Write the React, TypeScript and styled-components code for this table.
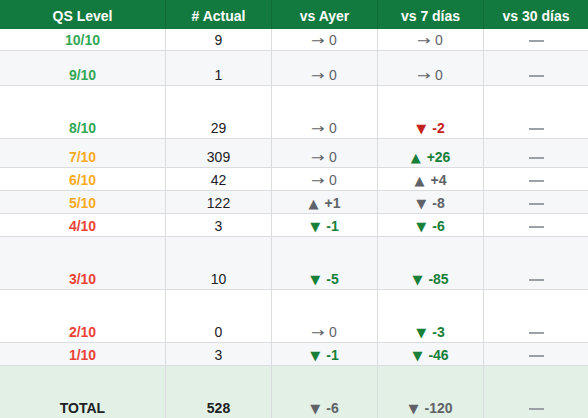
import React from "react";
import styled, { createGlobalStyle } from "styled-components";

const GlobalStyle = createGlobalStyle`
    html, body {
        margin: 0;
        padding: 0;
        background: #ffffff;
    }
    body {
        font-family: "Liberation Sans", Arial, sans-serif;
        font-size: 14px;
        color: #202124;
    }
`;

type Tone = "green" | "red" | "gray";

type Delta =
    | { kind: "flat" }
    | { kind: "up" | "down"; value: string; tone: Tone };

type Row = {
    level: string;
    levelColor: string;
    actual: string;
    ayer: Delta;
    siete: Delta;
    height: number;
    striped: boolean;
};

const toneColors: Record<Tone, string> = {
    green: "#188038",
    red: "#c5221f",
    gray: "#5f6368",
};

const GREEN = "#34a853";
const AMBER = "#f9ab1f";
const RED = "#ea4335";

const flat: Delta = { kind: "flat" };

const rows: Row[] = [
    { level: "10/10", levelColor: GREEN, actual: "9", ayer: flat, siete: flat, height: 22, striped: false },
    { level: "9/10", levelColor: GREEN, actual: "1", ayer: flat, siete: flat, height: 35, striped: true },
    { level: "8/10", levelColor: GREEN, actual: "29", ayer: flat, siete: { kind: "down", value: "-2", tone: "red" }, height: 53, striped: false },
    { level: "7/10", levelColor: AMBER, actual: "309", ayer: flat, siete: { kind: "up", value: "+26", tone: "green" }, height: 29, striped: true },
    { level: "6/10", levelColor: AMBER, actual: "42", ayer: flat, siete: { kind: "up", value: "+4", tone: "gray" }, height: 23, striped: false },
    { level: "5/10", levelColor: AMBER, actual: "122", ayer: { kind: "up", value: "+1", tone: "gray" }, siete: { kind: "down", value: "-8", tone: "gray" }, height: 23, striped: true },
    { level: "4/10", levelColor: RED, actual: "3", ayer: { kind: "down", value: "-1", tone: "green" }, siete: { kind: "down", value: "-6", tone: "green" }, height: 23, striped: false },
    { level: "3/10", levelColor: RED, actual: "10", ayer: { kind: "down", value: "-5", tone: "green" }, siete: { kind: "down", value: "-85", tone: "green" }, height: 53, striped: true },
    { level: "2/10", levelColor: RED, actual: "0", ayer: flat, siete: { kind: "down", value: "-3", tone: "green" }, height: 53, striped: false },
    { level: "1/10", levelColor: RED, actual: "3", ayer: { kind: "down", value: "-1", tone: "green" }, siete: { kind: "down", value: "-46", tone: "green" }, height: 23, striped: true },
];

const Sheet = styled.div`
    width: 588px;
    overflow: hidden;
`;

const Line = styled.div<{ $height: number; $bg: string }>`
    display: grid;
    grid-template-columns: 166px 106px 106px 106px 1fr;
    height: ${({ $height }) => $height}px;
    background: ${({ $bg }) => $bg};
    border-bottom: 1px solid #dadce0;
    box-sizing: border-box;
`;

const HeaderLine = styled(Line)`
    border-bottom: none;
`;

const HeadCell = styled.div`
    display: flex;
    align-items: center;
    justify-content: center;
    color: #ffffff;
    font-weight: bold;
    font-size: 14px;
    padding-top: 3px;
    border-right: 1px solid rgba(0, 0, 0, 0.12);

    &:last-child {
        border-right: none;
    }
`;

const Cell = styled.div<{ $color?: string; $bold?: boolean }>`
    display: flex;
    align-items: flex-end;
    justify-content: center;
    padding-bottom: 1px;
    line-height: 17px;
    border-right: 1px solid #dadce0;
    color: ${({ $color }) => $color || "#202124"};
    font-weight: ${({ $bold }) => ($bold ? "bold" : "normal")};
    white-space: nowrap;

    &:last-child {
        border-right: none;
    }
`;

const Flat = styled.span`
    color: #5f6368;
`;

const FlatArrow = styled.span`
    display: inline-block;
    font-family: "DejaVu Sans", sans-serif;
    font-size: 13px;
    transform: scaleX(1.25);
    margin-right: 6px;
`;

const Change = styled.span<{ $tone: Tone }>`
    color: ${({ $tone }) => toneColors[$tone]};
    font-weight: bold;
`;

const Triangle = styled.span`
    font-family: "DejaVu Sans", sans-serif;
    font-size: 13px;
    margin-right: 6px;
`;

const Dash = styled.span`
    display: inline-block;
    width: 15px;
    height: 2px;
    background: #9aa0a6;
    margin-bottom: 7px;
`;

function DeltaView({ delta }: { delta: Delta }) {
    if (delta.kind === "flat") {
        return (
            <Flat>
                <FlatArrow>→</FlatArrow>0
            </Flat>
        );
    }
    return (
        <Change $tone={delta.tone}>
            <Triangle>{delta.kind === "up" ? "▲" : "▼"}</Triangle>
            {delta.value}
        </Change>
    );
}

export default function App() {
    return (
        <Sheet>
            <GlobalStyle />
            <HeaderLine $height={29} $bg="#137a3f">
                <HeadCell>QS Level</HeadCell>
                <HeadCell># Actual</HeadCell>
                <HeadCell>vs Ayer</HeadCell>
                <HeadCell>vs 7 días</HeadCell>
                <HeadCell>vs 30 días</HeadCell>
            </HeaderLine>

            {rows.map((row) => (
                <Line
                    key={row.level}
                    $height={row.height}
                    $bg={row.striped ? "#f6f7f9" : "#ffffff"}
                >
                    <Cell $color={row.levelColor} $bold>
                        {row.level}
                    </Cell>
                    <Cell>{row.actual}</Cell>
                    <Cell>
                        <DeltaView delta={row.ayer} />
                    </Cell>
                    <Cell>
                        <DeltaView delta={row.siete} />
                    </Cell>
                    <Cell>
                        <Dash />
                    </Cell>
                </Line>
            ))}

            <Line $height={53} $bg="#e2f0e5">
                <Cell $bold>TOTAL</Cell>
                <Cell $bold>528</Cell>
                <Cell>
                    <DeltaView delta={{ kind: "down", value: "-6", tone: "gray" }} />
                </Cell>
                <Cell>
                    <DeltaView delta={{ kind: "down", value: "-120", tone: "gray" }} />
                </Cell>
                <Cell>
                    <Dash />
                </Cell>
            </Line>
        </Sheet>
    );
}
